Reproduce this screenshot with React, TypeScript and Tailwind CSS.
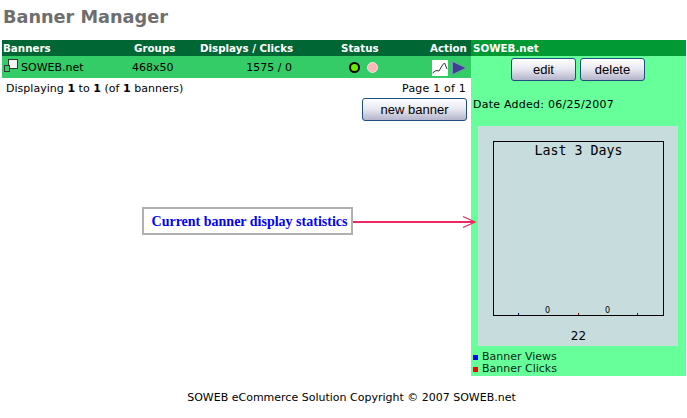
import { useState } from "react"

const cellFont = { fontFamily: '"DejaVu Sans", sans-serif' }

function GreyButton({ label, className }: { label: string; className: string }) {
  return (
    <button className={`h-[23px] rounded-[3px] border border-[#1f4f7f] bg-gradient-to-b from-white via-[#e6e6f0] to-[#b4b4cc] text-[13px] leading-none text-black font-['Liberation_Sans',sans-serif] ${className}`}>
      {label}
    </button>
  )
}

function Chart() {
  return (
    <div className="mt-[15px] ml-[7px] h-[220px] w-[200px] bg-[#c7dcdc] pt-[15px] pl-[15px]">
      <div className="relative h-[175px] w-[171px] border border-black">
        <div className="pt-[1px] text-center text-[13.3px] leading-[16px] text-black font-['DejaVu_Sans_Mono',monospace]">Last 3 Days</div>
        <span className="absolute bottom-0 left-[24px] h-[2px] w-px bg-[#00008b]" />
        <span className="absolute bottom-0 left-[84px] h-[2px] w-px bg-[#8b0000]" />
        <span className="absolute bottom-0 left-[143px] h-[2px] w-px bg-[#8b0000]" />
        <span className="absolute bottom-0 left-[51px] text-[8px] leading-[8px] text-black">0</span>
        <span className="absolute bottom-0 left-[111px] text-[8px] leading-[8px] text-black">0</span>
      </div>
      <div className="mt-[14px] w-[171px] text-center text-[12px] leading-[13px] text-black">22</div>
    </div>
  )
}

export default function App() {
  const [page] = useState(1)

  return (
    <div className="relative h-[418px] w-[687px] overflow-hidden bg-white text-[11px] text-black" style={cellFont}>
      <h1 className="h-[40px] pl-[3px] pt-[6px] text-[17.7px] font-bold leading-[22px] text-[#6e6e6e] font-['DejaVu_Sans',sans-serif]">Banner Manager</h1>

      <div className="ml-[2px] flex">
        {/* Banner list */}
        <div className="w-[469px]">
          <div className="flex h-[16px] items-center bg-[#006633] text-[10.3px] font-bold leading-none text-white">
            <span className="w-[132px] pl-[1px]">Banners</span>
            <span className="w-[66px]">Groups</span>
            <span className="w-[141px]">Displays / Clicks</span>
            <span className="w-[89px]">Status</span>
            <span>Action</span>
          </div>
          <div className="flex h-[22px] items-center bg-[#33cc66] pt-[1px] leading-none">
            <span className="flex w-[130px] items-center pl-[2px]">
              <svg width="14" height="14" viewBox="0 0 14 14" className="mr-[3px] -mt-[4px]">
                <rect x="4.5" y="0.5" width="9" height="9" fill="#f4f4f4" stroke="#333" />
                <rect x="0.5" y="6.5" width="5" height="6" fill="#33cc66" stroke="#333" />
              </svg>
              SOWEB.net
            </span>
            <span className="w-[113px]">468x50</span>
            <span className="w-[47px] text-right">1575 / 0</span>
            <span className="ml-[57px] h-[11px] w-[11px] rounded-full border-2 border-black bg-[#66ee00]" />
            <span className="ml-[7px] h-[11px] w-[11px] rounded-full border border-[#e8e8e8] bg-[#ffb6b6]" />
            <svg width="16" height="16" viewBox="0 0 16 16" className="ml-[54px] bg-white">
              <path d="M0.5 13 L4 10.5 L7 11 L10.5 5 L12.5 3 L15 9" fill="none" stroke="#333" strokeWidth="1" />
            </svg>
            <svg width="15" height="14" viewBox="0 0 15 14" className="ml-[4px]">
              <path d="M0.5 0.5 L14 7 L0.5 13.5 Z" fill="#3f3f96" stroke="#9a9ad0" strokeWidth="0.6" />
            </svg>
          </div>
          <div className="flex justify-between pt-[4px] pl-[4px] pr-[5px] leading-[13px] tracking-[0.03px]">
            <span>Displaying <b>1</b> to <b>1</b> (of <b>1</b> banners)</span>
            <span className="tracking-[0.2px]">Page {page} of 1</span>
          </div>
          <div className="mt-[3px] flex justify-end pr-[4px]">
            <GreyButton label="new banner" className="w-[105px]" />
          </div>
        </div>

        {/* Selected banner panel */}
        <div className="h-[336px] w-[215px] bg-[#66ff99]">
          <div className="flex h-[16px] items-center bg-[#009933] pl-[2px] text-[10.3px] font-bold leading-none text-white">SOWEB.net</div>
          <div className="mt-[2px] flex gap-[4px] pl-[40px]">
            <GreyButton label="edit" className="w-[65px]" />
            <GreyButton label="delete" className="w-[65px]" />
          </div>
          <div className="mt-[17px] pl-[2px] text-[11px] leading-[13px] tracking-[0.25px]">Date Added: 06/25/2007</div>
          <Chart />
          <div className="mt-[5px] flex items-center pl-[2px] leading-[12px] text-[#0a2a14]">
            <span className="mr-[4px] h-[5px] w-[5px] bg-[#0000ff]" />Banner Views
          </div>
          <div className="flex items-center pl-[2px] leading-[12px] text-[#0a2a14]">
            <span className="mr-[4px] h-[5px] w-[5px] bg-[#ff0000]" />Banner Clicks
          </div>
        </div>
      </div>

      <p className="mt-[15px] pl-[16px] text-center text-[11px] leading-[13px]">SOWEB eCommerce Solution Copyright © 2007 SOWEB.net</p>

      {/* Callout over the page */}
      <div className="absolute left-[142px] top-[207px] flex h-[28px] w-[211px] items-center justify-center border-2 border-[#b0b0b0] bg-white pl-[4px] text-[14px] font-bold text-[#0000ff] font-['Liberation_Serif',serif]">
        Current banner display statistics
      </div>
      <svg width="125" height="20" viewBox="0 0 125 20" className="absolute left-[353px] top-[212px]">
        <path d="M0 10 H121" fill="none" stroke="#f02860" strokeWidth="2" />
        <path d="M110 4.5 L122 10 L110 15.5" fill="none" stroke="#f02860" strokeWidth="1.3" />
      </svg>
    </div>
  )
}
